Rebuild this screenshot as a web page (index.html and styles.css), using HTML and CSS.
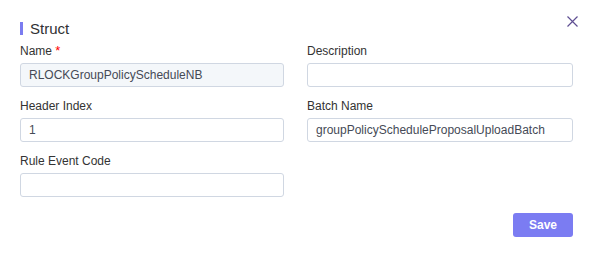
FILE: index.html
```html
<!DOCTYPE html>
<html>
<head>
<meta charset="utf-8">
<link rel="stylesheet" href="styles.css">
</head>
<body>
<div class="dialog">
  <div class="header">
    <div class="title"><span class="bar"></span><span class="title-text">Struct</span></div>
    <button class="close" aria-label="Close">
      <svg width="11" height="11" viewBox="0 0 11 11"><path d="M0.5 0.5L10.5 10.5M10.5 0.5L0.5 10.5" stroke="#5f4f92" stroke-width="1.2" fill="none"/></svg>
    </button>
  </div>
  <div class="form">
    <div class="field">
      <label class="label">Name <span class="req">*</span></label>
      <div class="input disabled">RLOCKGroupPolicyScheduleNB</div>
    </div>
    <div class="field">
      <label class="label">Description</label>
      <div class="input"></div>
    </div>
    <div class="field">
      <label class="label">Header Index</label>
      <div class="input">1</div>
    </div>
    <div class="field">
      <label class="label">Batch Name</label>
      <div class="input">groupPolicyScheduleProposalUploadBatch</div>
    </div>
    <div class="field">
      <label class="label">Rule Event Code</label>
      <div class="input"></div>
    </div>
  </div>
  <div class="footer">
    <button class="save">Save</button>
  </div>
</div>
</body>
</html>
```
FILE: styles.css
```css
* { box-sizing: border-box; }
html, body { margin: 0; padding: 0; background: #fff; }
body { font-family: "Liberation Sans", Arial, sans-serif; width: 592px; height: 264px; overflow: hidden; }
.dialog { padding: 16px 14px 0 20px; }
.header { display: flex; justify-content: space-between; align-items: flex-start; height: 27px; }
.title { display: flex; align-items: center; margin-top: 6px; height: 13px; }
.bar { display: block; width: 3px; height: 13px; background: #7b7cf0; }
.title-text { margin-left: 7px; font-size: 15px; color: #303133; line-height: 13px; }
.close { border: 0; background: none; padding: 0; width: 11px; height: 11px; margin-right: 0; margin-top: 0; display: block; }
.close svg { display: block; }
.form { display: grid; grid-template-columns: 264px 266px; column-gap: 23px; row-gap: 11px; }
.field { display: flex; flex-direction: column; }
.label { font-size: 12px; line-height: 16px; color: #333; margin-bottom: 4px; }
.req { color: #f00; font-size: 13px; }
.input { height: 24px; border: 1px solid #d0d7e2; border-radius: 3px; font-size: 12px; color: #454a56; padding: 0 8px; line-height: 22px; background: #fff; }
.input.disabled { background: #f4f7fa; }
.footer { display: flex; justify-content: flex-end; margin-top: 16px; padding-right: 5px; }
.save { width: 60px; height: 24px; border: 0; border-radius: 3px; background: #7b7cf2; color: #fff; font-family: "Liberation Sans", Arial, sans-serif; font-weight: bold; font-size: 12px; padding: 0; }
```
